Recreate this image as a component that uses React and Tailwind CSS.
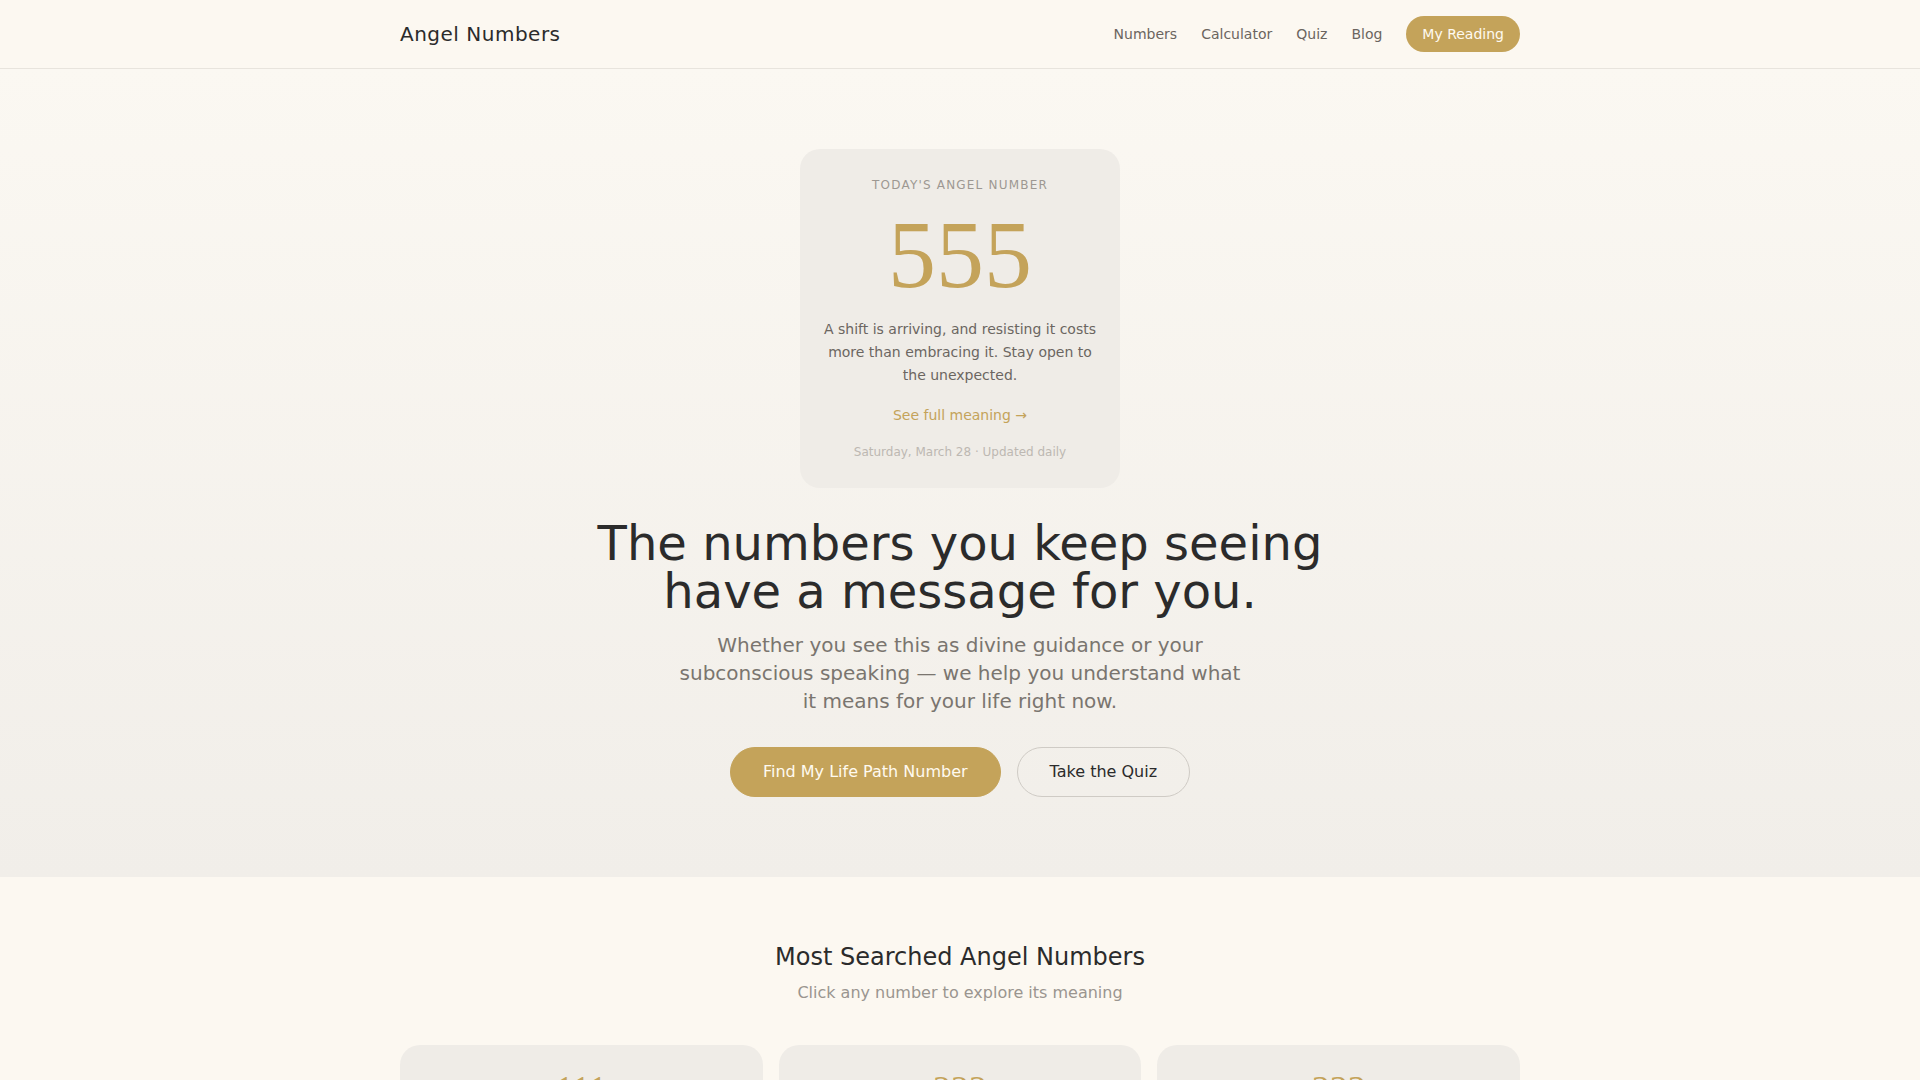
const nav = ["Numbers", "Calculator", "Quiz", "Blog"];

const popular = [
  { n: "111", title: "New Beginnings", text: "Your thoughts are manifesting quickly. Focus on what you want." },
  { n: "222", title: "Balance & Trust", text: "Things are falling into place. Keep faith in the process." },
  { n: "333", title: "Support Is Near", text: "You are guided and supported. Express yourself freely." },
];

export default function App() {
  return (
    <div className="min-h-screen bg-[#fcf8f1] text-[#2b2b2b] [font-family:'DejaVu_Sans',sans-serif]">
      <header className="border-b border-[#e8e4dd]">
        <div className="mx-auto flex h-[68px] max-w-[1120px] items-center justify-between">
          <a className="text-xl tracking-wide text-[#2b2b2b]">Angel Numbers</a>
          <nav className="flex items-center gap-6 text-sm text-[#6b655f]">
            {nav.map((item) => (
              <a key={item}>{item}</a>
            ))}
            <button className="rounded-full bg-[#c4a35a] px-4 py-2 text-sm text-[#fffaf0]">My Reading</button>
          </nav>
        </div>
      </header>

      <section className="bg-gradient-to-b from-[#fbf8f2] to-[#f1eee9] pt-20 pb-20">
        <div className="flex flex-col items-center text-center">
          <div className="w-80 rounded-[20px] bg-[#efece7] px-6 pt-7 pb-7">
            <p className="text-xs uppercase tracking-widest text-[#9d9892]">Today's Angel Number</p>
            <div className="mt-3.5 text-8xl leading-none text-[#c4a35a] [font-family:'Liberation_Serif',serif]">555</div>
            <p className="mt-[15px] text-sm leading-[23px] text-[#6b6661]">
              A shift is arriving, and resisting it costs more than embracing it. Stay open to the unexpected.
            </p>
            <a className="mt-[18px] block text-sm text-[#c4a35a]">See full meaning →</a>
            <p className="mt-[19px] text-xs text-[#bdb8b2]">Saturday, March 28 · Updated daily</p>
          </div>

          <h1 className="mt-[31px] text-5xl leading-none text-[#2b2b2b]">
            The numbers you keep seeing
            <br />
            have a message for you.
          </h1>
          <p className="mt-4 max-w-xl text-xl leading-7 text-[#7a756f]">
            Whether you see this as divine guidance or your subconscious speaking — we help you understand what it means for your life right now.
          </p>

          <div className="mt-8 flex gap-4">
            <button className="rounded-full border border-[#c4a35a] bg-[#c4a35a] px-8 py-3 text-base text-[#fffaf0]">
              Find My Life Path Number
            </button>
            <button className="rounded-full border border-[#cfcbc5] px-8 py-3 text-base text-[#2b2b2b]">
              Take the Quiz
            </button>
          </div>
        </div>
      </section>

      <section className="pt-16 pb-20">
        <div className="mx-auto max-w-[1120px] text-center">
          <h2 className="text-2xl text-[#2b2b2b]">Most Searched Angel Numbers</h2>
          <p className="mt-2 text-base text-[#9a958f]">Click any number to explore its meaning</p>
          <div className="mt-10 grid grid-cols-3 gap-4">
            {popular.map((p) => (
              <div key={p.n} className="rounded-[20px] bg-[#efece7] p-6">
                <div className="text-4xl text-[#c4a35a] [font-family:'Liberation_Serif',serif]">{p.n}</div>
                <h3 className="mt-3 text-base text-[#2b2b2b]">{p.title}</h3>
                <p className="mt-2 text-sm leading-6 text-[#6b6661]">{p.text}</p>
              </div>
            ))}
          </div>
        </div>
      </section>
    </div>
  );
}
